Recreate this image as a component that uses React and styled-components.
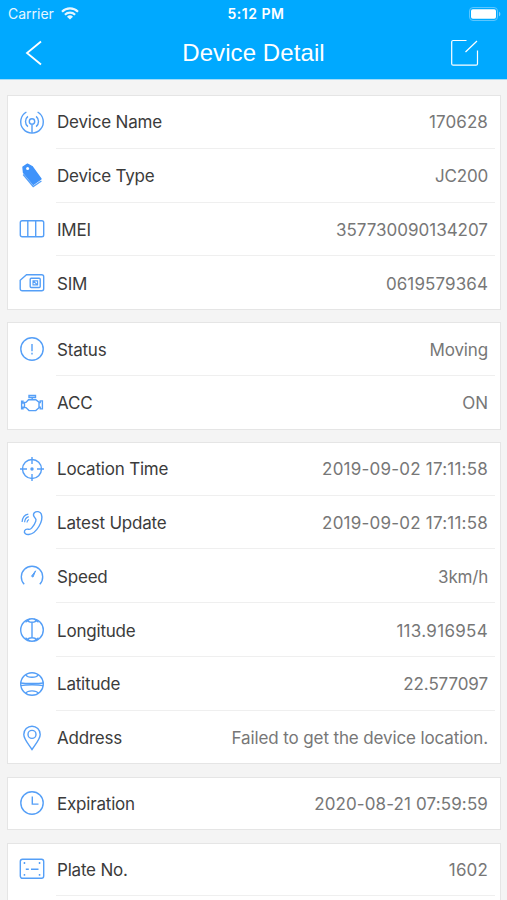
import React from 'react';
import styled, { createGlobalStyle } from 'styled-components';

const GlobalStyle = createGlobalStyle`
  body {
    margin: 0;
    background: #f4f4f4;
    font-family: Inter, 'Liberation Sans', sans-serif;
    overflow: hidden;
  }
`;

const Screen = styled.div`
  width: 507px;
  height: 900px;
  overflow: hidden;
`;

const Header = styled.header`
  height: 80px;
  background: #00a9ff;
  border-bottom: 1px solid #a3dcf8;
  box-sizing: border-box;
  color: #fff;
`;

const StatusBar = styled.div`
  display: grid;
  grid-template-columns: 1fr auto 1fr;
  align-items: center;
  height: 27px;
  padding: 0 6px 0 8px;
`;

const Carrier = styled.div`
  display: flex;
  align-items: center;
  gap: 7px;
  font-size: 14px;
  opacity: 0.9;
`;

const Clock = styled.div`
  padding-left: 3px;
  font-size: 14px;
  font-weight: 600;
  letter-spacing: 0.5px;
`;

const Battery = styled.svg`
  justify-self: end;
`;

const NavBar = styled.div`
  display: grid;
  grid-template-columns: 60px 1fr 60px;
  align-items: center;
  height: 51px;
  padding: 0 13px 0 4px;
`;

const NavIcon = styled.svg`
  justify-self: center;
  fill: none;
  stroke: #fff;
`;

const Title = styled.h1`
  margin: 0;
  padding-left: 9px;
  font-family: 'Liberation Sans', sans-serif;
  font-size: 24px;
  font-weight: 400;
  line-height: 28px;
  letter-spacing: 0.08px;
  text-align: center;
`;

const Content = styled.main`
  display: flex;
  flex-direction: column;
  gap: 12.2px;
  padding: 15px 6px 0 7px;
`;

const Card = styled.section`
  flex: none;
  background: #fff;
  box-shadow: inset 0 0 0 1px #e5e5e5;
  padding: 0 6px 0 12px;
`;

const Row = styled.div`
  display: flex;
  align-items: center;
  gap: 11px;
  height: 53.75px;
`;

const RowIcon = styled.svg`
  flex: none;
  width: 26px;
  height: 26px;
  fill: none;
  stroke: #559ff7;
  stroke-width: 1.4;
`;

const RowBody = styled.div`
  flex: 1;
  display: flex;
  justify-content: space-between;
  align-items: center;
  height: 100%;
  box-sizing: border-box;
  padding: 2px 7px 0 1px;
  border-bottom: 1px solid #efefef;
  font-size: 17px;

  ${Row}:last-child & {
    border-bottom-color: transparent;
  }
`;

const Label = styled.span`
  color: #3b3b3b;
  letter-spacing: -0.2px;
`;

const Value = styled.span`
  color: #777;
  letter-spacing: ${props => props.$tracking || 0}px;
`;

const icons = {
  antenna: (
    <>
      <path d="M7.4 3a11.3 11.3 0 1 0 11.2 0" />
      <path d="M8.9 7.4a6.6 6.6 0 0 0 0 10.2M17.1 7.4a6.6 6.6 0 0 1 0 10.2M13 15.3v8.6" />
      <circle cx="13" cy="12.4" r="2.7" />
    </>
  ),
  tag: (
    <>
      <path d="M4 4.2L8.5 1.2 13 3.5 22 16 14.3 21.4 4.5 9.5z" fill="#3f93fb" stroke="#3f93fb" strokeLinejoin="round" />
      <path d="M4.2 11.5l10 12L22.4 18" />
      <circle cx="8.6" cy="5.4" r="1.5" fill="#fff" stroke="none" />
    </>
  ),
  imei: (
    <>
      <rect x="1.3" y="4.8" width="23.4" height="16" rx="1.8" />
      <path d="M8.8 5v16M16.7 5v16" />
    </>
  ),
  sim: (
    <>
      <path d="M7.5 4.8H22.7a2 2 0 0 1 2 2v12a2 2 0 0 1-2 2H3.2a2 2 0 0 1-2-2v-8.5z" />
      <rect x="11.2" y="8.2" width="10" height="9.3" rx="1" />
      <path d="M14 10.9h4.6v4H14zM14 11l4.6 3.8" strokeWidth="1.1" />
    </>
  ),
  alert: (
    <>
      <circle cx="13" cy="13" r="11.2" />
      <path d="M13 8v7.3M13 16.8v1.6" />
    </>
  ),
  engine: (
    <>
      <path d="M10 5.5h6.5v2H10zM13.2 7.5v2.2M9.5 9.7h7.3l3.2 2.5v5.6l-3.2 2.8H10l-3-3H5.5v-5.2H7z" />
      <path d="M5.5 13H4v-1.8H2.6v7.6H4v-1.6h1.5M20 12.5h1.2v-1.6h2.2v8h-2.2v-1.6H20" />
    </>
  ),
  target: (
    <>
      <circle cx="13" cy="13" r="9.5" />
      <path d="M13 1v7M13 18v7M1 13h7M18 13h7" />
      <circle cx="13" cy="13" r="1" fill="#559ff7" />
    </>
  ),
  phone: (
    <>
      <path d="M15.3 2.8c2-2 6-1.4 7 1.2 2.5 7-4.7 19.5-12.5 20.5-3.2.3-5.1-1.8-4.2-3.8.7-1.4 2.4-1.8 4-1.4 1.4.4 2 0 3.2-1.4 1.9-2.2 3.3-4.5 4-6.8.5-1.5.2-2.4-.7-3.2-1.6-1.5-2-3.6-.8-5.1z" />
      <path d="M9.3 4.2C6 4.7 3.5 7.3 3.1 12M9.8 6.7C7.2 7.4 5.8 9.2 5.6 12.3M10 9.5c-1.4.6-2 1.5-2 3" strokeWidth="1.2" />
    </>
  ),
  gauge: (
    <>
      <path d="M5.2 21.2a10.7 10.7 0 1 1 15.6 0" />
      <path d="M16.6 7.8l-4.1 5.4 1.5.9z" fill="#559ff7" strokeWidth="1" />
    </>
  ),
  longitude: (
    <>
      <circle cx="13" cy="13" r="11.3" />
      <path d="M13 5v16M8.2 2.8c.5 1.5 2.5 2.5 4.8 2.5s4.3-1 4.8-2.5M8.2 23.2c.5-1.5 2.5-2.5 4.8-2.5s4.3 1 4.8 2.5M11 2l-4.5 3.2M15 2l4.5 3.2M11 24l-4.5-3.2M15 24l4.5-3.2" />
    </>
  ),
  latitude: (
    <>
      <circle cx="13" cy="13" r="11.3" />
      <path d="M2 12c4 .7 18 .7 22 0M2 14.6c5-1 17-1 22 0M7 4c1.5 3 10.5 3 12 0M7 22.3c1.5-3.2 10.5-3.2 12 0" />
    </>
  ),
  pin: (
    <>
      <path d="M13 24.5C9.5 19 4.8 14 4.8 9.4a8.2 8.2 0 0 1 16.4 0c0 4.6-4.7 9.6-8.2 15.1z" />
      <circle cx="13" cy="9.4" r="4" />
    </>
  ),
  clock: (
    <>
      <circle cx="13" cy="13" r="11.2" />
      <path d="M13.3 6.5v7.6h6.2" />
    </>
  ),
  plate: (
    <>
      <rect x="1.3" y="3.3" width="23.4" height="19" rx="2.2" />
      <path d="M6.8 13.3h3M12 13.3h7.5" />
      <path d="M4.7 7h1.5M19.8 7h1.5M4.7 18.8h1.5M19.8 18.8h1.5" strokeWidth="1.8" />
    </>
  ),
};

const groups = [
  [
    { icon: 'antenna', label: 'Device Name', value: '170628', tracking: 0.1 },
    { icon: 'tag', label: 'Device Type', value: 'JC200', tracking: -0.2 },
    { icon: 'imei', label: 'IMEI', value: '357730090134207' },
    { icon: 'sim', label: 'SIM', value: '0619579364', tracking: 0.1 },
  ],
  [
    { icon: 'alert', label: 'Status', value: 'Moving', tracking: -0.15 },
    { icon: 'engine', label: 'ACC', value: 'ON' },
  ],
  [
    { icon: 'target', label: 'Location Time', value: '2019-09-02 17:11:58', tracking: 0.22 },
    { icon: 'phone', label: 'Latest Update', value: '2019-09-02 17:11:58', tracking: 0.22 },
    { icon: 'gauge', label: 'Speed', value: '3km/h', tracking: -0.2 },
    { icon: 'longitude', label: 'Longitude', value: '113.916954', tracking: 0.3 },
    { icon: 'latitude', label: 'Latitude', value: '22.577097', tracking: -0.1 },
    { icon: 'pin', label: 'Address', value: 'Failed to get the device location.', tracking: -0.12 },
  ],
  [{ icon: 'clock', label: 'Expiration', value: '2020-08-21 07:59:59', tracking: 0.12 }],
  [{ icon: 'plate', label: 'Plate No.', value: '1602', tracking: 0.15 }, {}],
];

const DetailRow = ({ icon, label, value, tracking }) => (
  <Row>
    <RowIcon viewBox="0 0 26 26">{icons[icon]}</RowIcon>
    <RowBody>
      <Label>{label}</Label>
      <Value $tracking={tracking}>{value}</Value>
    </RowBody>
  </Row>
);

export default () => (
  <Screen>
    <GlobalStyle />
    <Header>
      <StatusBar>
        <Carrier>
          Carrier
          <svg width="18" height="13" viewBox="0 0 18 13" fill="none" stroke="#fff" strokeWidth="2.1">
            <path d="M1 4.7a11.3 11.3 0 0 1 16 0M3.9 7.7a7.2 7.2 0 0 1 10.2 0" />
            <path d="M9 12.6L6 9.8a4.3 4.3 0 0 1 6 0z" fill="#fff" stroke="none" />
          </svg>
        </Carrier>
        <Clock>5:12 PM</Clock>
        <Battery width="32" height="14" viewBox="0 0 32 14">
          <rect x="0.5" y="0.5" width="28" height="13" rx="3.5" fill="none" stroke="#5cc6ff" />
          <rect x="2" y="2.3" width="25" height="9.4" rx="1.8" fill="#fff" />
          <path d="M30 4.7c1.8.6 1.8 4 0 4.6z" fill="#7dd2ff" />
        </Battery>
      </StatusBar>
      <NavBar>
        <NavIcon width="22" height="26" viewBox="0 0 22 26" strokeWidth="1.8">
          <path d="M18 1.5L4 13l14 11.5" />
        </NavIcon>
        <Title>Device Detail</Title>
        <NavIcon width="30" height="28" viewBox="0 0 30 28" strokeWidth="1.2">
          <path d="M17.5 1.5H4.2a1.5 1.5 0 0 0-1.5 1.5V24.7a1.5 1.5 0 0 0 1.5 1.5H27a1.5 1.5 0 0 0 1.5-1.5V11.5M28 2L16.5 13" />
        </NavIcon>
      </NavBar>
    </Header>
    <Content>
      {groups.map((rows, i) => (
        <Card key={i}>
          {rows.map((row, j) => (
            <DetailRow key={j} {...row} />
          ))}
        </Card>
      ))}
    </Content>
  </Screen>
);
